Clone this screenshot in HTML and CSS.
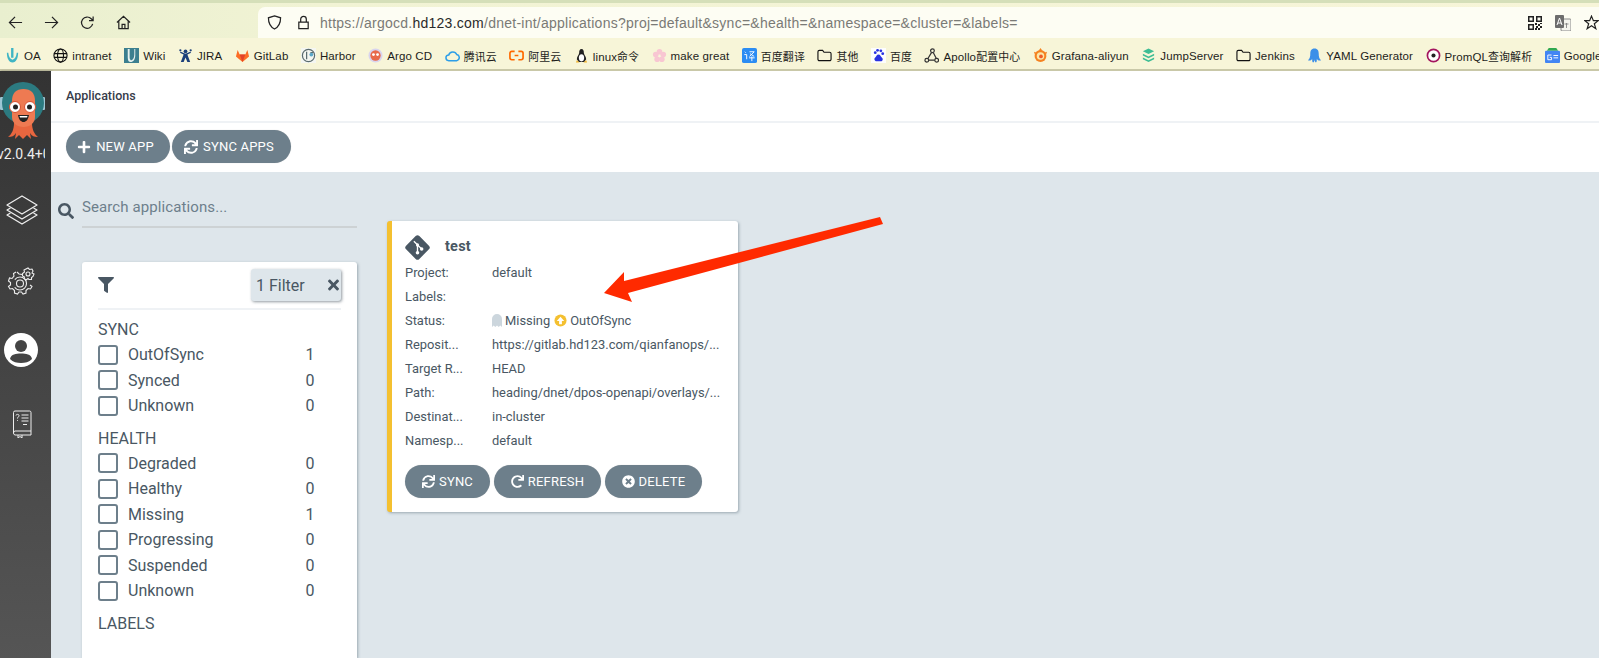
FILE: index.html
```html
<!DOCTYPE html>
<html lang="en">
<head>
    <meta charset="UTF-8">
    <title>Applications</title>
    <link rel="stylesheet" href="styles.css">
</head>
<body>
<div class="toolbar">
    <div class="nav">
        <svg class="nav-icon" viewBox="0 0 16 16"><path d="M15 8H1.5M7.5 2 1.5 8l6 6"/></svg>
        <svg class="nav-icon" viewBox="0 0 16 16"><path d="M1 8h13.5M8.5 2l6 6-6 6"/></svg>
        <svg class="nav-icon" viewBox="0 0 16 16"><path d="M13.5 9.5A6 6 0 1 1 12 4L14 6M14 1.5V6H9.6"/></svg>
        <svg class="nav-icon" viewBox="0 0 16 16"><path d="M1 8 8 1.5 15 8M3 6.5V14.5H13V6.5M6.5 14.5V10H9.5V14.5"/></svg>
    </div>
    <div class="address">
        <svg class="nav-icon shield" viewBox="0 0 16 16"><path d="M8 1 14.5 3C14.5 9 13 12.5 8 15 3 12.5 1.5 9 1.5 3Z"/></svg>
        <svg class="nav-icon lock" viewBox="0 0 16 16"><path d="M3 7.5H13V14.5H3ZM5 7.5V4.5A3 3 0 0 1 11 4.5V7.5"/></svg>
        <span class="url">https://argocd.<b>hd123.com</b>/dnet-int/applications?proj=default&amp;sync=&amp;health=&amp;namespace=&amp;cluster=&amp;labels=</span>
        <div class="address-end">
            <svg class="qr" viewBox="0 0 14 14"><path d="M0 0h6v6H0zM1.5 1.5v3h3v-3zM8 0h6v6H8zM9.5 1.5v3h3v-3zM0 8h6v6H0zM1.5 9.5v3h3v-3zM7 7h2v2H7zM10 8h2v2h-2zM12 10h2v2h-2zM8 10h2v2H8zM10 12h2v2h-2zM7 12h2v2H7zM12 7h2v1h-2z"/></svg>
            <svg class="translate" viewBox="0 0 16 16"><rect x="6" y="4" width="10" height="12" rx="1" fill="#f4f4ee" stroke="#888"/><rect width="9" height="13" rx="1" fill="#6d6d6d"/><path d="M2 10 4.5 3 7 10M3 8h3" fill="none" stroke="#fff"/><path d="M9.5 9h4M11.5 8v5" fill="none" stroke="#777" stroke-width=".8"/></svg>
            <svg class="nav-icon star" viewBox="0 0 16 16"><path d="M8 1.2 10 6h5.2L11 9.3 12.6 14.6 8 11.5 3.4 14.6 5 9.3 .8 6H6Z"/></svg>
        </div>
    </div>
</div>

<div class="bookmarks">
    <span class="mark"><svg class="mark-icon" viewBox="0 0 16 16"><path d="M6.5 0h2.5v10.5H6.5zM2 5h1.5c.5 4 1.5 6.5 4.5 7.500 3-1 4-3.500 4.500-7.500H14c0 6-2 10-6 10.500C4 15 2 11 2 5z" fill="#3fb5c4"/></svg>OA</span>
    <span class="mark"><svg class="mark-icon" viewBox="0 0 16 16"><g fill="none" stroke="#111" stroke-width="1.2"><circle cx="8" cy="8" r="7"/><ellipse cx="8" cy="8" rx="3.2" ry="7"/><path d="M1 6h14M1 10h14"/></g></svg>intranet</span>
    <span class="mark"><svg class="mark-icon" viewBox="0 0 16 16"><rect width="16" height="16" fill="#3c7f8f"/><path d="M6 1v9c0 2 1 3 2 3s3-2 3-6V1h1v7c0 4-2 7-5 7-2 0-3-2-3-5V1z" fill="#e8f2f0"/></svg>Wiki</span>
    <span class="mark"><svg class="mark-icon" viewBox="0 0 16 16"><g fill="#1b3f7a"><circle cx="8" cy="3.5" r="2"/><circle cx="2.5" cy="2.5" r="1.2"/><circle cx="13.5" cy="2.5" r="1.2"/><path d="M2 5 6 7 3 15H6L8 10 10 15H13L10 7 14 5 13 4 8 6 3 4Z"/></g></svg>JIRA</span>
    <span class="mark"><svg class="mark-icon" viewBox="0 0 16 16"><path d="M8 15 1 9 2.8 2 5 7H11L13.2 2 15 9Z" fill="#fc6d26"/><path d="M8 15 5 7H11Z" fill="#e24329"/></svg>GitLab</span>
    <span class="mark"><svg class="mark-icon" viewBox="0 0 16 16"><rect width="16" height="16" fill="#f4f6f2"/><circle cx="8" cy="8" r="6.5" fill="none" stroke="#5a6b6e" stroke-width="1.3"/><path d="M6 4v8M10 5h3" stroke="#5a6b6e" stroke-width="1.3"/><circle cx="11" cy="7" r="2" fill="#5aa7c9"/></svg>Harbor</span>
    <span class="mark"><svg class="mark-icon" viewBox="0 0 16 16"><circle cx="8" cy="8" r="7.5" fill="#d8d4ee"/><circle cx="8" cy="8" r="5.5" fill="#e8694a"/><circle cx="5.8" cy="7" r="1.5" fill="#fff"/><circle cx="10.2" cy="7" r="1.5" fill="#fff"/></svg>Argo CD</span>
    <span class="mark"><svg class="mark-icon" viewBox="0 0 16 16"><path d="M4 13.5A3 3 0 0 1 4 7.5 4.5 4.5 0 0 1 12.5 7 3.3 3.3 0 0 1 12.5 13.5Z" fill="none" stroke="#2d9ee8" stroke-width="1.6"/></svg><span class="cjk">腾讯云</span></span>
    <span class="mark"><svg class="mark-icon" viewBox="0 0 16 16"><path d="M6 3.5H3A2 2 0 0 0 1 5.5V10.5A2 2 0 0 0 3 12.5H6M10 3.5H13A2 2 0 0 1 15 5.5V10.5A2 2 0 0 1 13 12.5H10M6 8H10" fill="none" stroke="#ff6a00" stroke-width="1.8"/></svg><span class="cjk">阿里云</span></span>
    <span class="mark"><svg class="mark-icon" viewBox="0 0 16 16"><path d="M8 1C6 1 5.5 3 5.5 5 5.5 7 3 9 3 12L5 15H11L13 12C13 9 10.5 7 10.5 5 10.5 3 10 1 8 1Z" fill="#222"/><ellipse cx="8" cy="10.5" rx="2.8" ry="3.8" fill="#fff"/><path d="M3 13 6 15.5H2ZM13 13 10 15.5H14Z" fill="#f2b632"/></svg><span>linux<span class="cjk">命令</span></span></span>
    <span class="mark"><svg class="mark-icon" viewBox="0 0 16 16"><g fill="#f8c6d2"><circle cx="8" cy="4" r="3"/><circle cx="4" cy="7" r="3"/><circle cx="12" cy="7" r="3"/><circle cx="5.5" cy="12" r="3"/><circle cx="10.5" cy="12" r="3"/></g></svg>make great</span>
    <span class="mark"><svg class="mark-icon" viewBox="0 0 16 16"><rect width="16" height="16" rx="2" fill="#2b8cf3"/><path d="M3 4l1 1M2.5 7H5V12M8 4h5L8 9M8.5 6 13 9M7.5 10.5h6M10.5 9v5" fill="none" stroke="#fff"/></svg><span class="cjk">百度翻译</span></span>
    <span class="mark"><svg class="mark-icon" viewBox="0 0 16 14"><path d="M1 3A1.5 1.5 0 0 1 2.5 1.5H6L7.5 3.5H13.5A1.5 1.5 0 0 1 15 5V11A1.5 1.5 0 0 1 13.5 12.5H2.5A1.5 1.5 0 0 1 1 11Z" fill="none" stroke="#111" stroke-width="1.2"/></svg><span class="cjk">其他</span></span>
    <span class="mark"><svg class="mark-icon" viewBox="0 0 16 16"><rect width="16" height="16" fill="#fdfdfd"/><g fill="#2932e1"><circle cx="4.5" cy="5" r="1.5"/><circle cx="7" cy="2.5" r="1.5"/><circle cx="10.5" cy="3" r="1.5"/><circle cx="12.5" cy="6" r="1.5"/><path d="M8 7C6 7 6 9 4.5 10 3 11 3.5 14 6 14H10.5C13 14 13 11 11.5 10 10 9 10 7 8 7Z"/></g></svg><span class="cjk">百度</span></span>
    <span class="mark"><svg class="mark-icon" viewBox="0 0 16 16"><g fill="none" stroke="#333" stroke-width="1.3"><circle cx="9" cy="3" r="2"/><circle cx="3" cy="13" r="2"/><circle cx="13.5" cy="13" r="2"/><path d="M8 5 4 11.5M10 5l3 6M5 13h6.5"/></g></svg><span>Apollo<span class="cjk">配置中心</span></span></span>
    <span class="mark"><svg class="mark-icon" viewBox="0 0 16 16"><circle cx="8" cy="8.5" r="6.3" fill="#f58220"/><circle cx="8" cy="8.5" r="4" fill="#fbe6a8"/><circle cx="8.5" cy="9" r="2" fill="#f05a28"/><path d="M8 0 10 3H6ZM15 4l-1 3-2-2ZM1 4l3 1-2 2Z" fill="#f58220"/></svg>Grafana-aliyun</span>
    <span class="mark"><svg class="mark-icon" viewBox="0 0 16 16"><g fill="#3dbd94"><path d="M8 .5 14 3.5 8 6.5 2 3.5Z"/><path d="M2 6 8 9 14 6V8L8 11 2 8Z"/><path d="M2 10 8 13 14 10V12L8 15 2 12Z"/></g></svg>JumpServer</span>
    <span class="mark"><svg class="mark-icon" viewBox="0 0 16 14"><path d="M1 3A1.5 1.5 0 0 1 2.5 1.5H6L7.5 3.5H13.5A1.5 1.5 0 0 1 15 5V11A1.5 1.5 0 0 1 13.5 12.5H2.5A1.5 1.5 0 0 1 1 11Z" fill="none" stroke="#111" stroke-width="1.2"/></svg>Jenkins</span>
    <span class="mark"><svg class="mark-icon" viewBox="0 0 16 16"><path d="M8 .5C4.5.5 3.5 3 3.5 6 3.5 9 3 11 1 13 3 14 5 13 5.5 11.5 5.5 13 5.5 15 6.5 15.5 8 15 8 13 8 12 8 13 8.5 15 9.5 15.5 10.5 15 10.5 13 10.5 11.5 11 13 13 14 15 13 13 11 12.5 9 12.5 6 12.5 3 11.5.5 8 .5Z" fill="#3b8fe8"/></svg>YAML Generator</span>
    <span class="mark"><svg class="mark-icon" viewBox="0 0 16 16"><circle cx="8" cy="8" r="6.5" fill="#fff" stroke="#a3155e" stroke-width="1.8"/><circle cx="8" cy="8" r="2.2" fill="#222"/></svg><span>PromQL<span class="cjk">查询解析</span></span></span>
    <span class="mark"><svg class="mark-icon" viewBox="0 0 16 16"><path d="M2 3 4 0H12L14 3Z" fill="#2fa84f"/><rect y="3" width="16" height="13" rx="1" fill="#4285f4"/><path d="M7 7.5H3V12.5H7V10H5M9 8h5M9 10.5h5" fill="none" stroke="#fff"/></svg>Google</span>
</div>

<div class="app">
    <div class="sidebar">
        <svg class="logo" viewBox="0 0 45 60">
            <rect x="0" y="16" width="4" height="13" rx="1" fill="#9dc6d4"/>
            <rect x="41" y="16" width="4" height="13" rx="1" fill="#9dc6d4"/>
            <circle cx="23" cy="22" r="21" fill="#2c7a80"/>
            <path d="M14 42C14 48 12 53 8 56 12 56 14 55 16 52L15 58 19 54 23 58 27 54 31 58 30 52C32 55 34 56 38 56 34 53 32 48 32 42Z" fill="#e8663f"/>
            <path d="M12 20C12 12 16 8 23.5 8S35 12 35 20V36C35 42 30 46 23.5 46S12 42 12 36Z" fill="#ee7a52"/>
            <circle cx="15" cy="26" r="5.5" fill="#fff" stroke="#d8502f"/>
            <circle cx="30" cy="26" r="5.5" fill="#fff" stroke="#d8502f"/>
            <circle cx="15.5" cy="26" r="2.5" fill="#222"/>
            <circle cx="29.5" cy="26" r="2.5" fill="#222"/>
            <path d="M18 34H29C28 39 26 41 23.5 41S19 39 18 34Z" fill="#222"/>
            <path d="M19.5 35H27.5L27 36.5H20Z" fill="#fff"/>
        </svg>
        <div class="version"><span>v2.0.4+0ad1f3c</span></div>
        <svg class="side-icon layers" viewBox="0 0 32 30"><g fill="none" stroke="#eee" stroke-width="1.3" stroke-linejoin="round"><path d="M16 1 31 10 16 19 1 10Z"/><path d="M4.5 13 1 15 16 24 31 15 27.5 13"/><path d="M4.5 18 1 20 16 29 31 20 27.5 18"/></g></svg>
        <svg class="side-icon gears" viewBox="0 0 28 28"><g fill="none" stroke="#eee" stroke-width="1.1"><path d="M10 5 12 7C13 7 14 7 15 7.5M9 5 6.5 6.5 7 9 5 11.5 2.5 11 1.5 14 3.5 15.5 3.5 18 1.5 19.5 3 22 5.5 21.5 7.5 23.5 7.5 26 10.5 27 12 25 14.5 25 16 27 19 26 19 23.5 21 21.5 23.5 22 25 19.5 23 18"/><circle cx="13" cy="16.5" r="3.5"/><circle cx="13" cy="16.5" r="6.5" stroke-dasharray="16 8"/><circle cx="21" cy="7" r="2"/><path d="M21 1 22.5 2.5 25 2 26 4 25 6 27 7 26 9.5 24.5 10.5 24.5 12.5 22 12.5 21 11.5 19 13 17 11.5 17.5 10 15.5 9 15.5 6.5 17.5 5 17 3 19 2Z"/></g></svg>
        <svg class="side-icon user" viewBox="0 0 34 34"><circle cx="17" cy="17" r="17" fill="#fff"/><circle cx="17" cy="13" r="6" fill="#444"/><path d="M6 26C7 21 12 20.5 17 20.5S27 21 28 26C25 29 21 30 17 30S9 29 6 26Z" fill="#444"/></svg>
        <svg class="side-icon book" viewBox="0 0 20 28"><g fill="none" stroke="#eee" stroke-width="1"><path d="M1.5 23V2.5A1.5 1.5 0 0 1 3 1H17.5A1.5 1.5 0 0 1 19 2.5V25H3A2 2 0 0 1 1.5 23A2 2 0 0 1 3 21H19"/><path d="M6 25V28L8 26.5 10 28V25"/><path d="M4 5.5C4 4 7 4 7 5.5 7 7 5.5 7 5.5 8.5M5.5 10V10.8"/><path d="M9.5 5H16.5M9.5 8H16.5M9.5 11H16.5M11 14.5H15"/></g></svg>
    </div>

    <div class="main">
        <div class="page-title">Applications</div>
        <div class="actions">
            <button class="btn btn-new"><svg class="fa" viewBox="0 0 448 512"><path d="M416 208H272V64c0-17.67-14.33-32-32-32h-32c-17.67 0-32 14.33-32 32v144H32c-17.67 0-32 14.33-32 32v32c0 17.67 14.33 32 32 32h144v144c0 17.67 14.33 32 32 32h32c17.67 0 32-14.33 32-32V304h144c17.67 0 32-14.33 32-32v-32c0-17.67-14.33-32-32-32z"/></svg>NEW APP</button>
            <button class="btn btn-sync-apps"><svg class="fa" viewBox="0 0 512 512"><path d="M440.65 12.57l4 82.77A247.16 247.16 0 0 0 255.83 8C134.73 8 33.91 94.92 12.29 209.82A12 12 0 0 0 24.09 224h49.05a12 12 0 0 0 11.67-9.26 175.91 175.91 0 0 1 317-56.94l-101.46-4.86a12 12 0 0 0-12.57 12v47.41a12 12 0 0 0 12 12H500a12 12 0 0 0 12-12V12a12 12 0 0 0-12-12h-47.37a12 12 0 0 0-11.98 12.57zM255.83 432a175.61 175.61 0 0 1-146-77.8l101.8 4.87a12 12 0 0 0 12.57-12v-47.4a12 12 0 0 0-12-12H12a12 12 0 0 0-12 12V500a12 12 0 0 0 12 12h47.35a12 12 0 0 0 12-12.6l-4.15-82.57A247.17 247.17 0 0 0 255.83 504c121.11 0 221.93-86.92 243.55-201.82a12 12 0 0 0-11.8-14.18h-49.05a12 12 0 0 0-11.67 9.26A175.86 175.86 0 0 1 255.83 432z"/></svg>SYNC APPS</button>
        </div>

        <div class="content">
            <div class="left-col">
                <div class="search">
                    <svg class="search-icon" viewBox="0 0 512 512"><path d="M505 442.7L405.3 343c-4.5-4.5-10.6-7-17-7H372c27.6-35.3 44-79.7 44-128C416 93.1 322.9 0 208 0S0 93.1 0 208s93.1 208 208 208c48.3 0 92.7-16.4 128-44v16.3c0 6.4 2.5 12.5 7 17l99.7 99.7c9.4 9.4 24.6 9.4 33.9 0l28.3-28.3c9.4-9.4 9.4-24.6.1-34zM208 336c-70.7 0-128-57.2-128-128 0-70.7 57.2-128 128-128 70.7 0 128 57.2 128 128 0 70.7-57.2 128-128 128z"/></svg>
                    <div class="search-input">Search applications...</div>
                </div>
                <div class="filters">
                    <div class="filters-head">
                        <svg class="funnel" viewBox="0 0 512 512"><path d="M487.976 0H24.028C2.71 0-8.047 25.866 7.058 40.971L192 225.941V432c0 7.831 3.821 15.17 10.237 19.662l80 55.98C298.02 518.69 320 507.493 320 487.98V225.941l184.947-184.97C520.021 25.896 509.338 0 487.976 0z"/></svg>
                        <div class="filter-chip">1 Filter<svg class="chip-x" viewBox="0 0 352 512"><path d="M242.72 256l100.07-100.07c12.28-12.28 12.28-32.19 0-44.48l-22.24-22.24c-12.28-12.28-32.19-12.28-44.48 0L176 189.28 75.93 89.21c-12.28-12.28-32.19-12.28-44.48 0L9.21 111.45c-12.28 12.28-12.28 32.19 0 44.48L109.28 256 9.21 356.07c-12.28 12.28-12.28 32.19 0 44.48l22.24 22.24c12.28 12.28 32.2 12.28 44.48 0L176 322.72l100.07 100.07c12.28 12.28 32.2 12.28 44.48 0l22.24-22.24c12.28-12.28 12.28-32.19 0-44.48L242.72 256z"/></svg></div>
                    </div>
                    <div class="group-title">SYNC</div>
                    <div class="row"><i class="box"></i><span class="row-name">OutOfSync</span><span class="row-count">1</span></div>
                    <div class="row"><i class="box"></i><span class="row-name">Synced</span><span class="row-count">0</span></div>
                    <div class="row"><i class="box"></i><span class="row-name">Unknown</span><span class="row-count">0</span></div>
                    <div class="group-title group-next">HEALTH</div>
                    <div class="row"><i class="box"></i><span class="row-name">Degraded</span><span class="row-count">0</span></div>
                    <div class="row"><i class="box"></i><span class="row-name">Healthy</span><span class="row-count">0</span></div>
                    <div class="row"><i class="box"></i><span class="row-name">Missing</span><span class="row-count">1</span></div>
                    <div class="row"><i class="box"></i><span class="row-name">Progressing</span><span class="row-count">0</span></div>
                    <div class="row"><i class="box"></i><span class="row-name">Suspended</span><span class="row-count">0</span></div>
                    <div class="row"><i class="box"></i><span class="row-name">Unknown</span><span class="row-count">0</span></div>
                    <div class="group-title group-next">LABELS</div>
                </div>
            </div>

            <div class="card">
                <div class="card-head">
                    <svg class="git" viewBox="0 0 24 24"><rect x="3" y="3" width="18" height="18" rx="2.5" transform="rotate(45 12 12)" fill="#495763"/><path d="M8.5 6 12 9.5V17M12 9.5 16 13.5" stroke="#fff" stroke-width="1.3" fill="none"/><circle cx="12" cy="9.5" r="1.5" fill="#fff"/><circle cx="12" cy="17" r="1.7" fill="#fff"/><circle cx="16" cy="13.5" r="1.7" fill="#fff"/></svg>
                    <span class="card-name">test</span>
                </div>
                <div class="info"><span class="info-key">Project:</span><span>default</span></div>
                <div class="info"><span class="info-key">Labels:</span><span></span></div>
                <div class="info"><span class="info-key">Status:</span><span class="status"><svg class="ghost" viewBox="0 0 10 13"><path d="M0 13V5A5 5 0 0 1 10 5V13L8.3 11.5 6.7 13 5 11.5 3.3 13 1.7 11.5Z"/></svg><span>Missing</span><svg class="sync-badge" viewBox="0 0 14 14"><circle cx="7" cy="7" r="6.5" fill="#f4c030"/><path d="M7 3 11 7.5H8.5V11H5.5V7.5H3Z" fill="#fff"/></svg><span>OutOfSync</span></span></div>
                <div class="info"><span class="info-key">Reposit...</span><span>https://gitlab.hd123.com/qianfanops/...</span></div>
                <div class="info"><span class="info-key">Target R...</span><span>HEAD</span></div>
                <div class="info"><span class="info-key">Path:</span><span>heading/dnet/dpos-openapi/overlays/...</span></div>
                <div class="info"><span class="info-key">Destinat...</span><span>in-cluster</span></div>
                <div class="info"><span class="info-key">Namesp...</span><span>default</span></div>
                <div class="card-actions">
                    <button class="btn btn-sync"><svg class="fa" viewBox="0 0 512 512"><path d="M440.65 12.57l4 82.77A247.16 247.16 0 0 0 255.83 8C134.73 8 33.91 94.92 12.29 209.82A12 12 0 0 0 24.09 224h49.05a12 12 0 0 0 11.67-9.26 175.91 175.91 0 0 1 317-56.94l-101.46-4.86a12 12 0 0 0-12.57 12v47.41a12 12 0 0 0 12 12H500a12 12 0 0 0 12-12V12a12 12 0 0 0-12-12h-47.37a12 12 0 0 0-11.98 12.57zM255.83 432a175.61 175.61 0 0 1-146-77.8l101.8 4.87a12 12 0 0 0 12.57-12v-47.4a12 12 0 0 0-12-12H12a12 12 0 0 0-12 12V500a12 12 0 0 0 12 12h47.35a12 12 0 0 0 12-12.6l-4.15-82.57A247.17 247.17 0 0 0 255.83 504c121.11 0 221.93-86.92 243.55-201.82a12 12 0 0 0-11.8-14.18h-49.05a12 12 0 0 0-11.67 9.26A175.86 175.86 0 0 1 255.83 432z"/></svg>SYNC</button>
                    <button class="btn btn-refresh"><svg class="fa" viewBox="0 0 512 512"><path d="M500.33 0h-47.41a12 12 0 0 0-12 12.57l4 82.76A247.42 247.42 0 0 0 256 8C119.34 8 7.9 119.53 8 256.19 8.1 393.07 119.1 504 256 504a247.1 247.1 0 0 0 166.18-63.91 12 12 0 0 0 .48-17.43l-34-34a12 12 0 0 0-16.38-.55A176 176 0 1 1 402.1 157.8l-101.53-4.87a12 12 0 0 0-12.57 12v47.41a12 12 0 0 0 12 12h200.33a12 12 0 0 0 12-12V12a12 12 0 0 0-12-12z"/></svg>REFRESH</button>
                    <button class="btn btn-delete"><svg class="fa" viewBox="0 0 512 512"><path d="M256 8C119 8 8 119 8 256s111 248 248 248 248-111 248-248S393 8 256 8zm121.6 313.1c4.7 4.7 4.7 12.3 0 17L338 377.6c-4.7 4.7-12.3 4.7-17 0L256 312l-65.1 65.6c-4.7 4.7-12.3 4.7-17 0L134.4 338c-4.7-4.7-4.7-12.3 0-17l65.6-65-65.6-65.1c-4.7-4.7-4.7-12.3 0-17l39.6-39.6c4.7-4.7 12.3-4.7 17 0l65 65.7 65.1-65.6c4.7-4.7 12.3-4.7 17 0l39.6 39.6c4.7 4.7 4.7 12.3 0 17L312 256l65.6 65.1z"/></svg>DELETE</button>
                </div>
            </div>
        </div>
    </div>
</div>

<!-- red annotation arrow drawn on top of the screenshot -->
<svg class="arrow" viewBox="0 0 1599 658"><path d="M880 217 883 224 628 293 632 302 604 293 624 272 624 281Z"/></svg>
</body>
</html>
```

FILE: styles.css
```css
* {
    padding: 0;
    margin: 0;
    box-sizing: border-box;
}

html, body {
    width: 1599px;
    height: 658px;
    overflow: hidden;
}

body {
    position: relative;
    display: flex;
    flex-direction: column;
    font-family: Roboto, "Noto Sans CJK SC", sans-serif;
    color: #495763;
    background: #dee6eb;
}

/* browser chrome */
.toolbar {
    height: 38px;
    display: flex;
    padding-top: 4px;
    background: linear-gradient(90deg, #e9efcf 0, #f1f3d4 20%, #f7f5d8 100%);
    border-top: 3px solid #d5dfb9;
    flex-shrink: 0;
}

.nav {
    width: 258px;
    display: flex;
    align-items: center;
    gap: 21px;
    padding: 0 0 1px 8px;
}

.nav-icon {
    width: 15px;
    height: 15px;
    fill: none;
    stroke: #222;
    stroke-width: 1.3;
    flex-shrink: 0;
}

.address {
    flex: 1;
    height: 31px;
    display: flex;
    align-items: center;
    padding-left: 9px;
    background: #fdfdf3;
    border-radius: 7px 0 0 0;
}

.lock {
    margin-left: 14px;
}

.url {
    margin-left: 9px;
    font-family: "Liberation Sans", sans-serif;
    font-size: 14px;
    letter-spacing: .25px;
    color: #7a7a76;
    white-space: nowrap;
}

.url b {
    font-weight: normal;
    color: #2a2a2a;
}

.address-end {
    margin-left: auto;
    display: flex;
    align-items: center;
    gap: 13px;
}

.qr {
    width: 14px;
    height: 14px;
    fill: #222;
}

.translate {
    width: 16px;
    height: 16px;
}

.bookmarks {
    height: 33px;
    display: flex;
    align-items: center;
    gap: 12.5px;
    padding: 4px 0 0 5px;
    background: #f7f5d8;
    border-bottom: 2px solid #c9c8a8;
    font-family: "Liberation Sans", "Noto Sans CJK SC", sans-serif;
    font-size: 11.5px;
    letter-spacing: .12px;
    color: #1d1d1b;
    white-space: nowrap;
    overflow: hidden;
    flex-shrink: 0;
}

.mark {
    display: flex;
    align-items: center;
    gap: 4px;
}

.mark-icon {
    width: 15px;
    height: 15px;
    flex-shrink: 0;
}

.cjk {
    font-size: 10.9px;
}

/* app */
.app {
    flex: 1;
    display: flex;
    min-height: 0;
}

.sidebar {
    width: 51px;
    flex-shrink: 0;
    background: linear-gradient(180deg, #333 0, #555 100%);
    box-shadow: 1px 0 2px rgba(0, 0, 0, .3);
    overflow: hidden;
}

.logo {
    display: block;
    width: 45px;
    height: 60px;
    margin-top: 10px;
}

.version {
    width: 45px;
    height: 18px;
    margin-top: 4px;
    overflow: hidden;
    font-size: 14px;
    line-height: 18px;
    color: #eee;
    white-space: nowrap;
}

.version span {
    display: block;
    margin-left: -3px;
}

.side-icon {
    display: block;
}

.layers {
    width: 32px;
    height: 30px;
    margin: 32px 0 0 6px;
}

.gears {
    width: 28px;
    height: 28px;
    margin: 42px 0 0 7px;
}

.user {
    width: 34px;
    height: 34px;
    margin: 38px 0 0 4px;
}

.book {
    width: 20px;
    height: 28px;
    margin: 43px 0 0 12px;
}

.main {
    flex: 1;
    display: flex;
    flex-direction: column;
    min-width: 0;
}

.page-title {
    height: 52px;
    padding: 17px 0 0 15px;
    background: #fff;
    border-bottom: 2px solid #eff2f5;
    font-size: 12.5px;
    font-weight: 500;
    line-height: 16px;
    color: #363c4a;
}

.actions {
    height: 49px;
    display: flex;
    gap: 2px;
    padding: 7px 0 0 15px;
    background: #fff;
}

.btn {
    height: 33px;
    display: inline-flex;
    align-items: center;
    justify-content: center;
    gap: 4px;
    border: 0;
    border-radius: 17px;
    background: #6d7f8b;
    color: #fff;
    font-family: Roboto, sans-serif;
    font-size: 13px;
    font-weight: 400;
    letter-spacing: .2px;
    box-shadow: 0 0 1px rgba(0, 0, 0, .2);
}

.fa {
    width: 13px;
    height: 13px;
    fill: #fff;
}

.btn-new {
    width: 104px;
    padding-right: 5px;
    gap: 5px;
}

.btn-sync-apps {
    width: 119px;
    padding-right: 5px;
    gap: 5px;
}

.btn-new .fa,
.btn-sync-apps .fa {
    width: 14px;
    height: 14px;
}

.btn-sync {
    width: 85px;
}

.btn-refresh {
    width: 107px;
}

.btn-delete {
    width: 97px;
}

.content {
    flex: 1;
    display: flex;
    min-height: 0;
    padding-left: 7px;
    background: #dee6eb;
}

.left-col {
    width: 299px;
    flex-shrink: 0;
    display: flex;
    flex-direction: column;
}

.search {
    height: 90px;
    display: flex;
    padding-top: 21px;
}

.search-icon {
    width: 16px;
    height: 16px;
    margin: 10px 8px 0 0;
    fill: #495763;
    flex-shrink: 0;
}

.search-input {
    flex: 1;
    height: 35px;
    padding-top: 4px;
    border-bottom: 2px solid #cdd2d4;
    font-size: 15px;
    line-height: 20px;
    letter-spacing: .1px;
    color: #6d7f8b;
}

.filters {
    flex: 1;
    margin-left: 24px;
    padding: 7px 16px 0;
    background: #fff;
    border-radius: 3px 3px 0 0;
    box-shadow: 1px 1px 3px rgba(109, 127, 139, .6);
}

.filters-head {
    height: 41px;
    display: flex;
    justify-content: space-between;
    border-bottom: 2px solid #eff2f5;
}

.funnel {
    width: 16px;
    height: 16px;
    margin-top: 8px;
    fill: #495763;
}

.filter-chip {
    width: 90px;
    height: 32px;
    display: flex;
    align-items: center;
    justify-content: space-between;
    padding: 0 2px 0 5px;
    background: #dee6eb;
    border-radius: 3px;
    box-shadow: 1px 1px 3px rgba(73, 87, 99, .6);
    font-size: 16px;
}

.chip-x {
    width: 11px;
    height: 16px;
    fill: #495763;
}

.group-title {
    height: 20px;
    margin: 10px 0 2px;
    font-size: 16px;
    line-height: 20px;
}

.group-next {
    margin-top: 10px;
}

.row {
    height: 25.5px;
    display: flex;
    align-items: center;
    font-size: 16px;
}

.box {
    width: 20px;
    height: 20px;
    border: 2px solid #6d7f8b;
    border-radius: 3px;
    flex-shrink: 0;
}

.row-name {
    width: 177px;
    margin-left: 10px;
}

.row-count {
    width: 10px;
    text-align: center;
}

.card {
    width: 351px;
    height: 291px;
    margin: 49px 0 0 30px;
    padding: 14px 0 0 13px;
    background: #fff;
    border-left: 5px solid #f4c030;
    border-radius: 3px;
    box-shadow: 1px 1px 3px rgba(109, 127, 139, .6);
    font-size: 12.9px;
}

.card-head {
    height: 25px;
    display: flex;
    align-items: center;
    gap: 15px;
}

.git {
    width: 25px;
    height: 25px;
}

.card-name {
    margin-bottom: 3px;
    font-size: 14.5px;
    font-weight: 700;
    letter-spacing: .2px;
}

.info {
    height: 24px;
    display: flex;
    align-items: center;
    white-space: nowrap;
}

.info-key {
    width: 87px;
    flex-shrink: 0;
}

.status {
    display: flex;
    align-items: center;
}

.ghost {
    width: 10px;
    height: 13px;
    margin-right: 3px;
    fill: #ccd6dd;
}

.sync-badge {
    width: 13px;
    height: 13px;
    margin: 0 3px 0 4px;
}

.card-actions {
    display: flex;
    gap: 4px;
    margin-top: 13px;
}

/* annotation */
.arrow {
    position: absolute;
    left: 0;
    top: 0;
    width: 1599px;
    height: 658px;
    fill: #ff2a00;
    pointer-events: none;
}
```
